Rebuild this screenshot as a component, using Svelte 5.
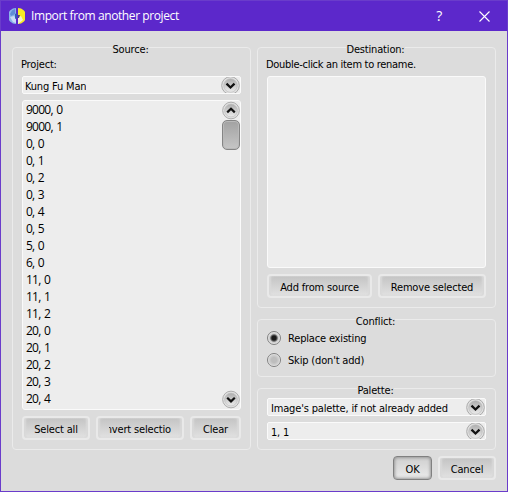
<script>
  const frames = ['9000, 0', '9000, 1', '0, 0', '0, 1', '0, 2', '0, 3', '0, 4', '0, 5', '5, 0', '6, 0', '11, 0', '11, 1', '11, 2', '20, 0', '20, 1', '20, 2', '20, 3', '20, 4'];
  const palettes = ["Image's palette, if not already added", '1, 1'];
  let conflict = $state(0);
</script>

{#snippet arrow(up)}
  <svg class="arrow" width="19" height="19" viewBox="0 0 19 19">
    <defs>
      <linearGradient id="knob" x1="0" y1="0" x2="0" y2="1">
        <stop offset="0" stop-color="#adadad" />
        <stop offset="1" stop-color="#ececec" />
      </linearGradient>
    </defs>
    <circle cx="9.5" cy="9.5" r="8.8" fill="#e2e2e2" stroke="#aaa" />
    <circle cx="9.5" cy="9.5" r="6.8" fill="url(#knob)" stroke="#bdbdbd" stroke-width=".7" />
    {#if up}
      <path d="M5.5 11.5L9.5 7.7L13.5 11.5" fill="none" stroke="#111" stroke-width="2.3" />
    {:else}
      <path d="M5.5 7.7L9.5 11.5L13.5 7.7" fill="none" stroke="#111" stroke-width="2.3" />
    {/if}
  </svg>
{/snippet}

<div class="window">
  <header>
    <svg class="logo" width="16" height="16" viewBox="0 0 16 16">
      <path d="M7 0A8 8 0 0 0 7 16Z" fill="#8ab4ea" />
      <path d="M3 2.5L6 1V6L2 8L1 6Z" fill="#5f8dd6" />
      <path d="M1 9L5 8L7 10V15L4 14Z" fill="#c9dcf6" />
      <path d="M9 0A8 8 0 0 1 9 16Z" fill="#f7ec25" />
      <path d="M9 9L12 8L14 12L9 16Z" fill="#f5f3cf" />
      <path d="M6 6L8 5V10L6 11Z" fill="#2f5cb8" />
      <path d="M9 7H11L10 10H9Z" fill="#4b4a75" />
    </svg>
    <h1>Import from another project</h1>
    <span class="help">?</span>
    <svg class="close" width="11" height="11" viewBox="0 0 11 11"><path d="M.5 .5L10.5 10.5M10.5 .5L.5 10.5" stroke="#fff" stroke-width="1.1" /></svg>
  </header>

  <main>
    <section class="group source">
      <h2><span>Source:</span></h2>
      <p class="project">Project:</p>
      <div class="combo"><span class="val kung">Kung Fu Man</span>{@render arrow(false)}</div>
      <div class="list items">
        <ul>
          {#each frames as f}<li>{f}</li>{/each}
        </ul>
        <div class="scroll">
          {@render arrow(true)}
          <div class="thumb"></div>
          {@render arrow(false)}
        </div>
      </div>
      <div class="row">
        <button class="sel">Select all</button>
        <button class="inv"><span class="clip"><span>Invert selection</span></span></button>
        <button class="clr">Clear</button>
      </div>
    </section>

    <div class="right">
      <section class="group dest">
        <h2><span>Destination:</span></h2>
        <p class="hint">Double-click an item to rename.</p>
        <div class="list"></div>
        <div class="row">
          <button class="add">Add from source</button>
          <button class="rem">Remove selected</button>
        </div>
      </section>
      <section class="group conflict">
        <h2><span>Conflict:</span></h2>
        {#each ['Replace existing', "Skip (don't add)"] as label, i}
          <label>
            <input type="radio" name="conflict" value={i} bind:group={conflict} />
            <i></i><span>{label}</span>
          </label>
        {/each}
      </section>
      <section class="group palette">
        <h2><span>Palette:</span></h2>
        {#each palettes as p}
          <div class="combo"><span class="val">{p}</span>{@render arrow(false)}</div>
        {/each}
      </section>
    </div>
  </main>

  <footer>
    <button class="ok">OK</button>
    <button class="cancel">Cancel</button>
  </footer>
</div>

<style>
  * { box-sizing: border-box; }
  .window {
    width: 508px; height: 492px; display: flex; flex-direction: column;
    border: 1px solid #6a3ccb; background: #dcdcdc; color: #000;
    font: 11px/14px "DejaVu Sans Condensed", "DejaVu Sans", sans-serif;
    font-stretch: condensed; letter-spacing: -.17px; white-space: nowrap; overflow: hidden;
  }
  header { height: 30px; flex: none; display: flex; align-items: center; background: #5c28cb; color: #fff; padding: 0 17px 0 8px; }
  .logo { margin-top: -1px; }
  h1 { margin: 0 auto 0 6px; font: 12px/16px "Open Sans", "Noto Sans", sans-serif; letter-spacing: -.4px; }
  .help { font: 14px/16px "Open Sans", sans-serif; margin-right: 37px; }
  main { display: flex; gap: 6px; padding: 16px 11px 0; height: 419px; flex: none; }
  .group { width: 239px; border: 1px solid #ebebeb; border-radius: 4px; padding: 0 9px; }
  h2 { margin: -6px 2px 0 0; height: 15px; font: inherit; line-height: 15px; text-align: center; }
  h2 span { background: #dcdcdc; display: inline-block; height: 15px; }
  p { margin: 0 0 0 -1px; height: 19px; line-height: 15px; }
  .hint { letter-spacing: -.3px; }
  .right { display: flex; flex-direction: column; }
  .dest { height: 261px; margin-bottom: 11px; }
  .conflict { height: 58px; margin-bottom: 11px; }
  .palette { height: 62px; }
  .combo {
    height: 18px; display: flex; justify-content: space-between; align-items: center;
    border: 1px solid #fafafa; border-radius: 2px; background: #ededed; overflow: hidden;
  }
  .combo .arrow { flex: none; }
  .val { height: 14px; line-height: 15px; padding-left: 3px; overflow: hidden; margin-top: 2px; }
  .kung { padding-left: 2px; }
  .combo + .combo { margin-top: 6px; }
  .list { height: 192px; border: 1px solid #fafafa; border-radius: 3px; background: #ededed; }
  .items { height: 310px; margin-top: 6px; display: flex; justify-content: space-between; }
  ul { list-style: none; margin: 0; padding: 0 0 0 3px; font: 12px/17px "Open Sans", "Noto Sans", sans-serif; letter-spacing: -.75px; word-spacing: 1px; }
  li { height: 17px; }
  .scroll { width: 18px; display: flex; flex-direction: column; }
  .scroll .arrow { width: 18px; height: 19px; flex: none; }
  .thumb { height: 30px; border: 1px solid #858585; border-radius: 5px; background: linear-gradient(#a2a2a2, #c6c6c6); box-shadow: inset 0 0 0 1px #b9b9b9; margin-bottom: auto; }
  .row { display: flex; gap: 6px; margin-top: 6px; }
  button {
    height: 24px; padding: 3px 0 0; border: 2px solid #e9e9e9; border-radius: 4px; color: #000; font: inherit; letter-spacing: inherit;
    background: linear-gradient(#c4c4c4, #e2e2e2); box-shadow: inset 2px 0 2px #d9d9d9, inset -2px 0 2px #d9d9d9;
  }
  .sel { width: 68px; } .inv { width: 88px; } .clr { width: 51px; }
  .add { width: 105px; } .rem { width: 108px; }
  .clip { display: flex; justify-content: center; width: 62px; margin: 0 auto; overflow: hidden; }
  label { display: flex; align-items: center; height: 22px; gap: 7px; }
  h2 + label { margin-top: -2px; }
  label span { padding-top: 2px; }
  input { position: absolute; opacity: 0; }
  i { width: 14px; height: 14px; border: 1px solid #808080; border-radius: 50%; background: radial-gradient(circle, #bdbdbd 0 30%, #d2d2d2 60%, #e9e9e9 68%); }
  input:checked + i { background: radial-gradient(circle, #1a1a1a 0 24%, #666 38%, #c9c9c9 50%, #e6e6e6 68%); }
  footer { display: flex; justify-content: flex-end; gap: 6px; padding: 6px 11px 0; }
  .ok { width: 39px; border: 1px solid #808080; box-shadow: inset 0 0 3px 1px #999; background: linear-gradient(#cfcfcf, #ebebeb); }
  .cancel { width: 58px; }
</style>
